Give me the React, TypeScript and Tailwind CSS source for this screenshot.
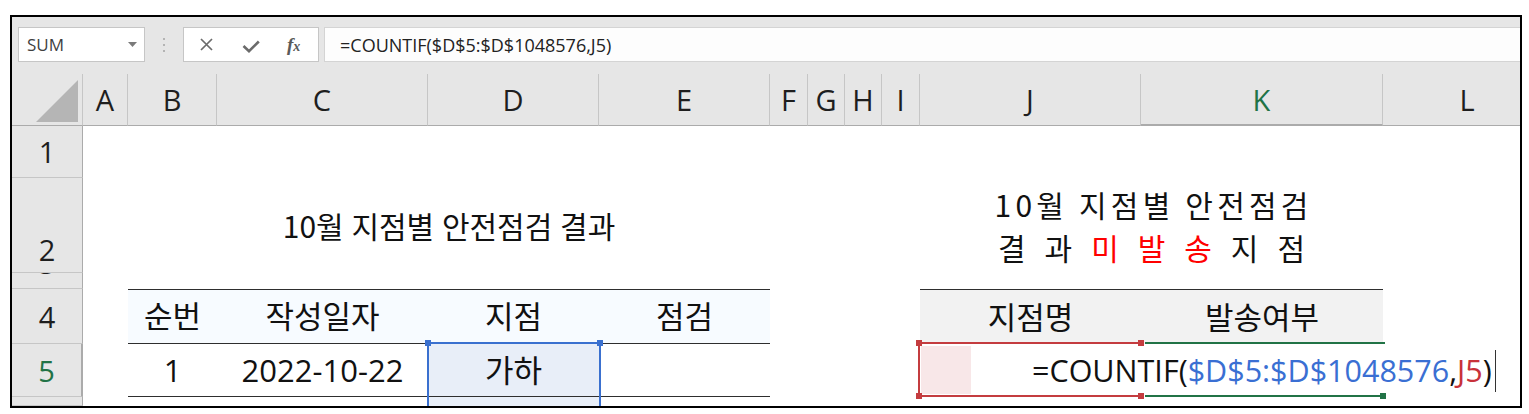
const COLS = "grid grid-cols-[71px_45px_89px_211px_171px_171px_38px_37px_37px_38px_221px_242px_168px]";
const UI = "font-['Open_Sans','Noto_Sans_CJK_KR',sans-serif]";
const KR = "font-['Noto_Sans_CJK_KR',sans-serif]";

const letters = [
  { l: "A", cls: "" },
  { l: "B", cls: "" },
  { l: "C", cls: "" },
  { l: "D", cls: "" },
  { l: "E", cls: "" },
  { l: "F", cls: "" },
  { l: "G", cls: "" },
  { l: "H", cls: "" },
  { l: "I", cls: "" },
  { l: "J", cls: "" },
  { l: "K", cls: "bg-[#d2d2d2] text-[#217346] border-b-2 border-b-[#217346]" },
  { l: "L", cls: "border-r-0" },
];

function FormulaBar() {
  return (
    <div className={`h-[57px] shrink-0 bg-[#e6e6e6] flex items-start pt-[10px] pl-[6px] ${UI}`}>
      {/* Name box */}
      <div className="w-[127px] h-[35px] bg-white border border-[#c6c6c6] flex items-center justify-between pl-[8px] pr-[7px]">
        <span className="text-[17px] text-[#3f3f3f] leading-none">SUM</span>
        <svg width="9" height="5" viewBox="0 0 9 5">
          <path d="M0 0h9L4.5 5z" fill="#7a7a7a" />
        </svg>
      </div>

      <div className="w-[38px] flex flex-col items-center gap-[4px] pt-[11px]">
        <span className="w-[2px] h-[2px] bg-[#b4b4b4]" />
        <span className="w-[2px] h-[2px] bg-[#b4b4b4]" />
        <span className="w-[2px] h-[2px] bg-[#b4b4b4]" />
      </div>

      {/* cancel / enter / fx */}
      <div className="w-[136px] h-[35px] bg-white border border-[#c6c6c6] flex items-center">
        <svg className="ml-[16px]" width="13" height="13" viewBox="0 0 13 13">
          <path d="M1 1L12 12M12 1L1 12" stroke="#6b6b6b" strokeWidth="1.7" />
        </svg>
        <svg className="ml-[29px] mt-[3px]" width="18" height="13" viewBox="0 0 18 13">
          <path d="M1.5 6L7 11.2L16.8 1.5" stroke="#6b6b6b" strokeWidth="2.6" fill="none" />
        </svg>
        <span className="ml-[27px] font-['Liberation_Serif',serif] italic font-bold text-[#5a5a5a] text-[19px] leading-none">
          f<span className="text-[14px]">x</span>
        </span>
      </div>

      <div className="ml-[5px] flex-1 h-[35px] bg-[#fdfdfd] border border-[#d4d4d4] border-r-0 flex items-center pl-[15px]">
        <span className="text-[18px] text-[#222] leading-none">=COUNTIF($D$5:$D$1048576,J5)</span>
      </div>
    </div>
  );
}

function ColumnHeaders() {
  return (
    <div className={`${COLS} h-[52px] shrink-0 ${UI} text-[29px] text-[#1e1e1e]`}>
      <div className="bg-[#e6e6e6] border-r border-r-[#c6c6c6] border-b border-b-[#ababab] flex items-end justify-end pr-[4px] pb-[3px]">
        <svg width="42" height="42" viewBox="0 0 42 42">
          <path d="M0 42L42 0V42z" fill="#b5b5b5" />
        </svg>
      </div>
      {letters.map((c) => (
        <div
          key={c.l}
          className={`bg-[#e6e6e6] border-r border-r-[#c6c6c6] border-b border-b-[#ababab] flex items-center justify-center leading-none ${c.cls}`}
        >
          {c.l}
        </div>
      ))}
    </div>
  );
}

const rowHead = "col-start-1 bg-[#e6e6e6] border-r border-r-[#ababab] border-b border-b-[#c6c6c6] flex justify-center leading-none text-[29px] text-[#1e1e1e]";
const leftHead = "row-start-4 bg-[#f7fbff] border-t border-b border-[#2e2e2e] flex items-center justify-center text-[31px]";
const leftCell = "row-start-5 border-b border-[#2e2e2e] flex items-center justify-center text-[31px]";

export default function App() {
  return (
    <div className="w-[1529px] h-[414px] bg-white pt-[15px] pl-[10px]">
      <div className="w-[1512px] h-[393px] border-2 border-black flex flex-col overflow-hidden bg-white">
        <FormulaBar />
        <ColumnHeaders />

        {/* Sheet body */}
        <div className={`${COLS} grid-rows-[52px_95px_16px_55px_53px_1fr] flex-1 ${UI} text-[30px] text-[#111]`}>
          {/* Row headers */}
          <div className={`${rowHead} row-start-1 items-center`}>1</div>
          <div className={`${rowHead} row-start-2 items-end pb-[8px]`}>2</div>
          <div className={`${rowHead} row-start-3 items-start overflow-hidden`}>
            <span className="-mt-[25px]">3</span>
          </div>
          <div className={`${rowHead} row-start-4 items-center`}>4</div>
          <div className={`${rowHead} row-start-5 items-center bg-[#d2d2d2] text-[#217346] border-r-2 border-r-[#217346]`}>5</div>
          <div className={`${rowHead} row-start-6`} />

          {/* Left title */}
          <div className={`col-start-3 col-span-4 row-start-2 flex items-center justify-center text-[30px] [word-spacing:1px] ${KR}`}>
            10월 지점별 안전점검 결과
          </div>

          {/* Right title */}
          <div className={`col-start-11 col-span-2 row-start-2 flex flex-col items-center justify-center text-[30px] leading-[43px] ${KR}`}>
            <div className="tracking-[4.2px] pl-[4.2px]">10월 지점별 안전점검</div>
            <div className="w-[307px] flex justify-between">
              <span>결</span>
              <span>과</span>
              <span className="text-[#ff0000]">미</span>
              <span className="text-[#ff0000]">발</span>
              <span className="text-[#ff0000]">송</span>
              <span>지</span>
              <span>점</span>
            </div>
          </div>

          {/* Left table */}
          <div className={`col-start-3 ${leftHead}`}>순번</div>
          <div className={`col-start-4 ${leftHead}`}>작성일자</div>
          <div className={`col-start-5 ${leftHead}`}>지점</div>
          <div className={`col-start-6 ${leftHead}`}>점검</div>

          <div className={`col-start-3 ${leftCell}`}>1</div>
          <div className={`col-start-4 ${leftCell}`}>2022-10-22</div>
          <div className={`col-start-5 ${leftCell} bg-[#e8eef8] relative`}>
            가하
            {/* reference range $D$5:$D$1048576 */}
            <div className="absolute -left-[1px] -right-[2px] -top-[2px] -bottom-[40px] border-2 border-[#3a70cf] pointer-events-none" />
            <span className="absolute -left-[3px] -top-[4px] w-[6px] h-[6px] bg-[#3a70cf]" />
            <span className="absolute -right-[4px] -top-[4px] w-[6px] h-[6px] bg-[#3a70cf]" />
          </div>
          <div className="col-start-6 row-start-5 border-b border-[#2e2e2e]" />
          <div className="col-start-5 row-start-6 bg-[#e8eef8]" />

          {/* Right table */}
          <div className="col-start-11 row-start-4 bg-[#f2f2f2] border-t border-[#2e2e2e] flex items-center justify-center text-[31px]">지점명</div>
          <div className="col-start-12 row-start-4 bg-[#f2f2f2] border-t border-[#2e2e2e] flex items-center justify-center text-[31px]">발송여부</div>

          {/* J5 (red reference) */}
          <div className="col-start-11 row-start-5 relative">
            <div className="absolute left-[1px] top-[2px] w-[50px] h-[48px] bg-[#f8e7e8]" />
            <div className="absolute -left-[2px] right-0 -top-[2px] bottom-0 border-2 border-r-0 border-[#c43c3f]" />
            <span className="absolute -left-[4px] -top-[4px] w-[6px] h-[6px] bg-[#c43c3f]" />
            <span className="absolute -left-[4px] -bottom-[2px] w-[6px] h-[6px] bg-[#c43c3f]" />
            <span className="absolute -right-[3px] -top-[4px] w-[6px] h-[6px] bg-[#c43c3f]" />
            <span className="absolute -right-[3px] -bottom-[2px] w-[6px] h-[6px] bg-[#c43c3f]" />

            {/* in-cell editor */}
            <div className="absolute left-[112px] top-[2px] bottom-[2px] w-[480px] flex items-center whitespace-nowrap z-10 text-[30.5px]">
              <span>=COUNTIF(</span>
              <span className="text-[#3a6fd3]">$D$5:$D$1048576</span>
              <span>,</span>
              <span className="text-[#c8313a]">J5</span>
              <span>)</span>
              <span className="ml-[3px] w-px h-[42px] bg-[#333]" />
            </div>
          </div>

          {/* K5 (green active cell) */}
          <div className="col-start-12 row-start-5 relative">
            <div className="absolute left-[4px] -right-[2px] -top-[2px] h-[2px] bg-[#217346]" />
            <div className="absolute left-[4px] -right-[2px] bottom-0 h-[2px] bg-[#217346]" />
            <span className="absolute -right-[3px] -bottom-[2px] w-[6px] h-[6px] bg-[#217346]" />
          </div>
        </div>
      </div>
    </div>
  );
}
